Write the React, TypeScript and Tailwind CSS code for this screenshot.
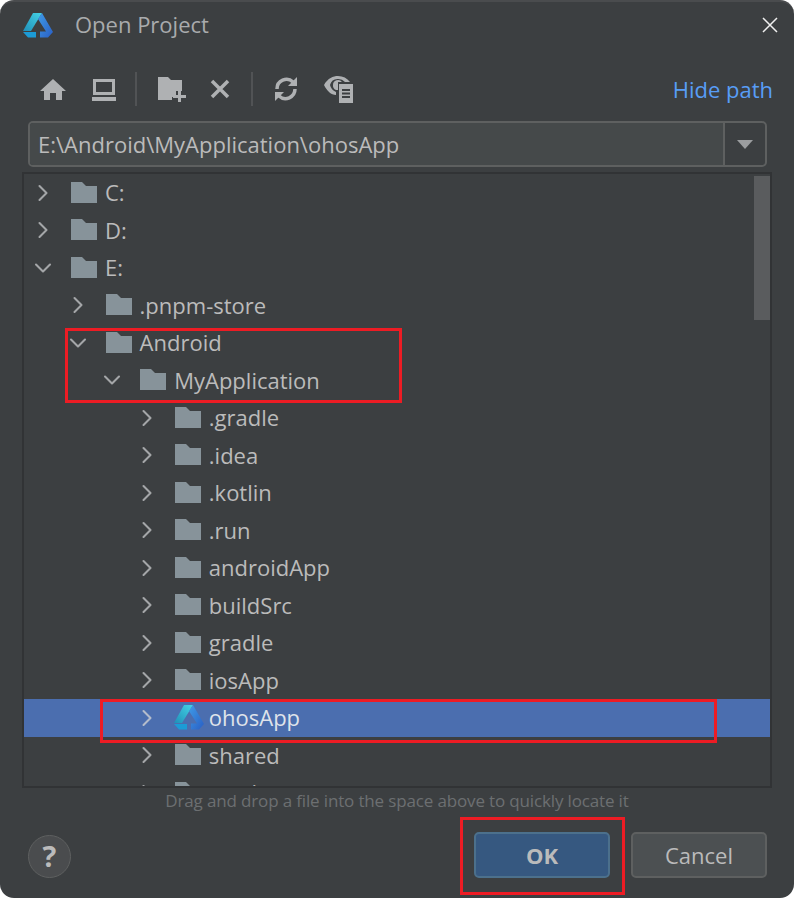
import React from 'react';
import { ChevronRight, ChevronDown } from 'lucide-react';

type Row = { name: string; depth: number; open?: boolean; logo?: boolean; selected?: boolean };

const rows: Row[] = [
  { name: 'C:', depth: 0 },
  { name: 'D:', depth: 0 },
  { name: 'E:', depth: 0, open: true },
  { name: '.pnpm-store', depth: 1 },
  { name: 'Android', depth: 1, open: true },
  { name: 'MyApplication', depth: 2, open: true },
  { name: '.gradle', depth: 3 },
  { name: '.idea', depth: 3 },
  { name: '.kotlin', depth: 3 },
  { name: '.run', depth: 3 },
  { name: 'androidApp', depth: 3 },
  { name: 'buildSrc', depth: 3 },
  { name: 'gradle', depth: 3 },
  { name: 'iosApp', depth: 3 },
  { name: 'ohosApp', depth: 3, logo: true, selected: true },
  { name: 'shared', depth: 3 },
  { name: 'version', depth: 3 },
];

const Logo: React.FC<{ id: string; className: string }> = ({ id, className }) => (
  <svg viewBox="0 0 30 25" className={className}>
    <defs>
      <linearGradient id={`${id}a`} x1="0" y1="1" x2="1" y2="0">
        <stop offset="0" stopColor="#1f8fb8" />
        <stop offset="1" stopColor="#45d3e6" />
      </linearGradient>
      <linearGradient id={`${id}b`} x1="0" y1="0" x2="1" y2="1">
        <stop offset="0" stopColor="#3f9be8" />
        <stop offset="1" stopColor="#2a5fc4" />
      </linearGradient>
    </defs>
    <path d="M10 0h9L8 18H0z" fill={`url(#${id}a)`} />
    <path d="M19 0 30 19 25 24.500H17V18.500h6L15 6z" fill={`url(#${id}b)`} />
    <path d="M0 19h13v5.500H5z" fill="#1c9bd6" />
  </svg>
);

const Folder = () => (
  <svg viewBox="0 0 26 22" className="w-[26px] h-[22px] shrink-0" fill="#87939a">
    <path d="M0 0h11l4 4h11v17H0z" />
  </svg>
);

const TreeRow: React.FC<{ row: Row }> = ({ row }) => {
  const Chevron = row.open ? ChevronDown : ChevronRight;
  return (
    <div
      className={`h-[37.5px] shrink-0 flex items-center ${row.selected ? 'bg-[#4b6eaf] text-[#dfe3ea]' : 'text-[#bbbbbb]'}`}
      style={{ paddingLeft: 5 + row.depth * 34.6 }}
    >
      <Chevron
        className={`w-[28px] h-[28px] shrink-0 ${row.selected ? 'text-[#b4bccb]' : 'text-[#a4a6a8]'}`}
        strokeWidth={1.8}
      />
      <span className="w-[14px] shrink-0" />
      {row.logo ? <Logo id="row" className="w-[30px] h-[25px] shrink-0 -ml-[1px] -mr-[3px]" /> : <Folder />}
      <span className="ml-[8px] whitespace-nowrap">{row.name}</span>
    </div>
  );
};

const Sep = () => <div className="w-[2px] h-[34px] bg-[#515355]" />;

const Toolbar = () => (
  <div className="h-[34px] flex items-center pl-[40px] mt-[24px]">
    <svg viewBox="0 0 26 24" className="w-[26px] h-[24px]" fill="#afb1b3">
      <path d="M13 2 0 14h4v9h6v-7h6v7h6v-9h4z" />
    </svg>
    <svg viewBox="0 0 24 24" className="w-[24px] h-[24px] ml-[26px]" fill="none" stroke="#afb1b3" strokeWidth="3">
      <path d="M2.500 3.500h19v13h-19z" />
      <path d="M0 22h24" strokeWidth="4" />
    </svg>
    <div className="ml-[19px]">
      <Sep />
    </div>
    <svg viewBox="0 0 28 26" className="w-[28px] h-[26px] ml-[21px]" fill="#afb1b3">
      <path d="M0 1h10l3 3h11v11h-6v6h-4v3H0z" />
      <path d="M20 14h3v5h5v3h-5v4h-3v-4h-5v-3h5z" />
    </svg>
    <svg viewBox="0 0 20 20" className="w-[20px] h-[20px] ml-[24px]" fill="none" stroke="#afb1b3" strokeWidth="3.500">
      <path d="m2 2 16 16M18 2 2 18" />
    </svg>
    <div className="ml-[21px]">
      <Sep />
    </div>
    <svg viewBox="0 0 24 26" className="w-[24px] h-[26px] ml-[21px]" fill="none" stroke="#afb1b3" strokeWidth="3.500">
      <path d="M3 13a9.500 9.500 0 0 1 16-7" />
      <path d="M21 13a9.500 9.500 0 0 1-16 7" />
      <path d="M23 1v9h-9z" fill="#afb1b3" stroke="none" />
      <path d="M1 25v-9h9z" fill="#afb1b3" stroke="none" />
    </svg>
    <svg viewBox="0 0 30 28" className="w-[30px] h-[28px] ml-[26px]">
      <path d="M0 10C4 3 9 1 14 1c5 0 9 2 12 6h-5a9 9 0 0 0-7-3 8 8 0 0 0-8 6 10 10 0 0 0 6 7v3C7 20 3 16 0 10z" fill="#afb1b3" />
      <path d="M9 10a5 5 0 0 1 9-3h-4v8h-2a5 5 0 0 1-3-5z" fill="#afb1b3" />
      <path d="M15 9h14v19H15z" fill="#afb1b3" />
      <path d="M18 15h8M18 18.500h8M18 22h8" stroke="#3c3f41" strokeWidth="2" />
    </svg>
    <button className="ml-auto mr-[21px] text-[#589df6] whitespace-nowrap">Hide path</button>
  </div>
);

export default function App() {
  return (
    <div className="relative w-[794px] h-[898px] overflow-hidden bg-[#3c3f41] border-t-2 border-[#4a4c4e] rounded-[14px] text-[22px] font-['Open_Sans','Noto_Sans',sans-serif] flex flex-col">
      {/* title bar */}
      <div className="h-[46px] flex items-center pl-[23px] pr-[16px] shrink-0">
        <Logo id="title" className="w-[30px] h-[25px]" />
        <span className="ml-[22px] text-[#a9abad] -mt-[1px]">Open Project</span>
        <svg viewBox="0 0 16 16" className="w-[16px] h-[16px] ml-auto" fill="none" stroke="#f0f0f0" strokeWidth="1.500">
          <path d="m1 1 14 14M15 1 1 15" />
        </svg>
      </div>

      <Toolbar />

      {/* path box */}
      <div className="mt-[15px] ml-[28px] mr-[27px] h-[46px] shrink-0 flex rounded-[5px] border-2 border-[#5e6060] overflow-hidden">
        <div className="flex-1 bg-[#45494a] flex items-center pl-[8px] text-[#bbbbbb]">E:\Android\MyApplication\ohosApp</div>
        <div className="w-[42px] border-l-2 border-[#5e6060] flex items-center justify-center">
          <svg viewBox="0 0 16 9" className="w-[16px] h-[9px]" fill="#9b9d9f">
            <path d="M0 0h16L8 9z" />
          </svg>
        </div>
      </div>

      {/* tree */}
      <div className="relative mt-[5px] ml-[22px] w-[750px] h-[616px] shrink-0 border-2 border-[#313335] overflow-hidden flex flex-col">
        {rows.map(row => (
          <TreeRow key={row.name} row={row} />
        ))}
        <div className="absolute top-[2px] right-0 w-[16px] h-[144px] bg-[#5a5c5e]" />
      </div>

      <div className="h-[26px] flex items-center justify-center text-[17px] tracking-[-0.15px] text-[#6c6f71] shrink-0">
        Drag and drop a file into the space above to quickly locate it
      </div>

      {/* footer */}
      <div className="mt-[18px] ml-[28px] mr-[27px] flex items-center">
        <div className="w-[43px] h-[43px] mt-[2px] rounded-full bg-[#4a4c4e] border border-[#5e6060] flex items-center justify-center text-[#bbbbbb] font-bold text-[29px]">
          ?
        </div>
        <button className="ml-auto w-[136px] h-[46px] rounded-[5px] bg-[#365880] border-2 border-[#4c708c] text-[#bbbbbb] font-bold">
          OK
        </button>
        <button className="ml-[21px] w-[136px] h-[46px] rounded-[5px] bg-[#4c5052] border-2 border-[#5e6060] text-[#bbbbbb]">
          Cancel
        </button>
      </div>

      {/* red annotation boxes */}
      <div className="absolute left-[65px] top-[326px] w-[337px] h-[75px] border-[3px] border-[#ed1c24]" />
      <div className="absolute left-[100px] top-[697px] w-[617px] h-[44px] border-[3px] border-[#ed1c24]" />
      <div className="absolute left-[460px] top-[815px] w-[165px] h-[78px] border-[3px] border-[#ed1c24]" />
    </div>
  );
}
